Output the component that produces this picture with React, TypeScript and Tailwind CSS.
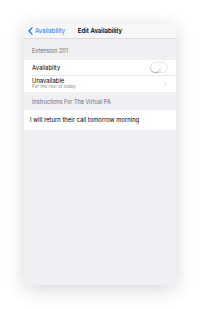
import React from 'react';

const font = { fontFamily: 'Inter, "Liberation Sans", sans-serif' };

function Toggle() {
  return (
    <div className="relative w-[18px] h-[11px] rounded-full border border-[#e5e5ea] bg-white">
      <div className="absolute left-0 top-0 w-[9px] h-[9px] rounded-full bg-white shadow-[0_1px_2px_rgba(0,0,0,0.3)]" />
    </div>
  );
}

export default function App() {
  return (
    <div className="w-[200px] h-[309px] bg-white p-[24px]" style={font}>
      <div className="w-[152px] h-[261px] bg-[#efeff4] flex flex-col shadow-[0_4px_18px_rgba(0,0,0,0.16)]">
        {/* Nav bar */}
        <div className="relative h-[15px] shrink-0 bg-[#f7f7f8] border-b border-[#dcdce0] flex items-center justify-center">
          <div className="absolute left-[4px] top-0 h-full flex items-center gap-[2px] text-[#007aff]">
            <svg width="5" height="8" viewBox="0 0 5 8" fill="none">
              <path d="M4 0.8L1 4l3 3.2" stroke="currentColor" strokeWidth="1.2" strokeLinecap="round" strokeLinejoin="round" />
            </svg>
            <span className="text-[6px] leading-none">Availability</span>
          </div>
          <span className="text-[6px] font-semibold leading-none text-black">Edit Availability</span>
        </div>

        {/* Section header */}
        <div className="h-[21px] shrink-0 flex items-end pl-[8px] pb-[6px]">
          <span className="text-[5.5px] leading-none text-[#6d6d72]">Extension 201</span>
        </div>

        <div className="bg-white flex flex-col">
          <div className="h-[15px] flex items-center justify-between pl-[8px] pr-[8px]">
            <span className="text-[5.9px] leading-none text-black">Availablity</span>
            <Toggle />
          </div>
          <div className="ml-[8px] h-px bg-[#e5e5ea]" />
          <div className="h-[16px] flex items-center justify-between pl-[8px] pr-[9px]">
            <div className="flex flex-col gap-[1px]">
              <span className="text-[5.9px] leading-none text-black">Unavailable</span>
              <span className="text-[4.6px] leading-none text-[#8e8e93]">For the rest of today</span>
            </div>
            <svg width="3" height="5" viewBox="0 0 3 5" fill="none">
              <path d="M0.5 0.5L2.5 2.5L0.5 4.5" stroke="#c7c7cc" strokeWidth="0.7" />
            </svg>
          </div>
        </div>

        <div className="h-[18px] shrink-0 flex items-center pl-[8px] pt-[4px]">
          <span className="text-[5.5px] leading-none text-[#6d6d72]">Instructions For The Virtual PA</span>
        </div>

        <div className="h-[20px] shrink-0 bg-white flex items-center pl-[6px]">
          <span className="text-[5.9px] leading-none text-black">I will return their call tomorrow morning</span>
        </div>
      </div>
    </div>
  );
}
